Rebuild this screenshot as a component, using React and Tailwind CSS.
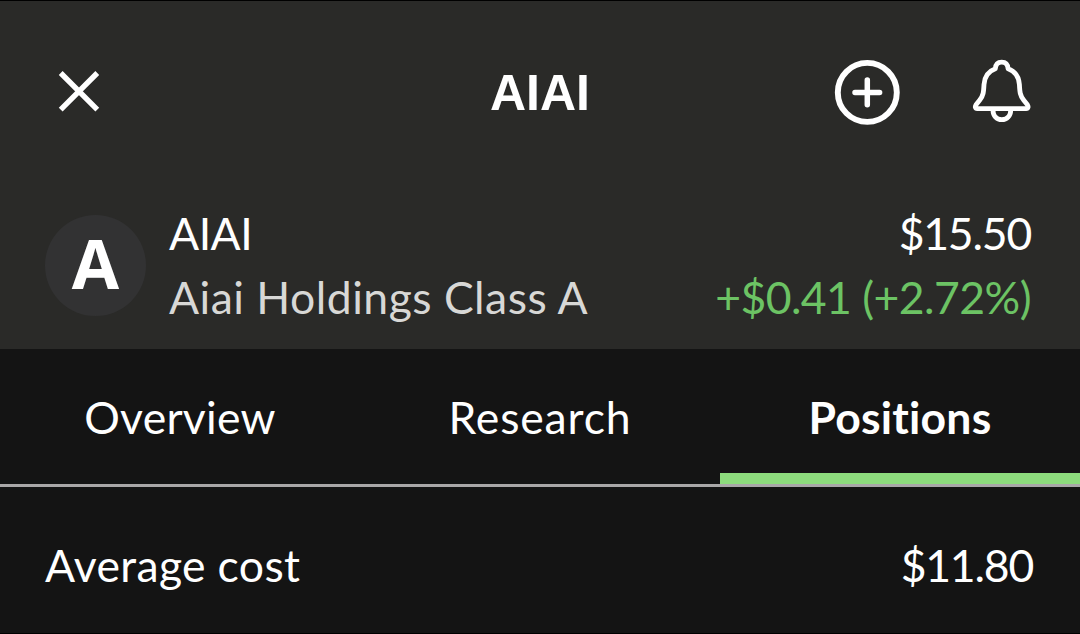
import { useState } from "react";

const tabs = [
  { name: "Overview", spacing: "tracking-[0.25px]" },
  { name: "Research", spacing: "tracking-[0.85px]" },
  { name: "Positions", spacing: "tracking-[0.2px]" },
];

function CloseIcon() {
  return (
    <svg width="44" height="44" viewBox="0 0 44 44" fill="none" stroke="currentColor" strokeWidth="5.4">
      <path d="M3.7 3 40.3 39.6M40.3 3 3.7 39.6" />
    </svg>
  );
}

function AddIcon() {
  return (
    <svg width="66" height="66" viewBox="0 0 66 66" fill="none" stroke="currentColor" strokeLinecap="round">
      <circle cx="33.3" cy="33.4" r="29.5" strokeWidth="5.9" />
      <path d="M33.3 21.1v24.6M21 33.4h24.6" strokeWidth="5.5" />
    </svg>
  );
}

function BellIcon() {
  return (
    <svg
      width="60"
      height="66"
      viewBox="0 0 60 66"
      fill="none"
      stroke="currentColor"
      strokeWidth="4.8"
      strokeLinecap="round"
      strokeLinejoin="round"
    >
      <path d="M29.7 3.2C26 3.2 23.6 5.6 23.3 9.8C16 12.4 12.6 17.6 12 25.5C11.6 33 11.4 36.5 7.8 41L4 45.8C2.8 47.6 3.2 49.6 5.2 49.6H54.2C56.2 49.6 56.6 47.6 55.4 45.8L51.6 41C48 36.5 47.8 33 47.4 25.5C46.8 17.6 43.4 12.4 36.1 9.8C35.8 5.6 33.4 3.2 29.7 3.2Z" />
      <path d="M21 51C21 57 24.8 60.7 29.8 60.7S38.7 57 38.7 51" />
    </svg>
  );
}

export default function App() {
  const [activeTab, setActiveTab] = useState("Positions");

  return (
    <div className="flex h-[634px] w-[1080px] flex-col overflow-hidden border-y border-black bg-[#141414] font-['Lato',sans-serif] text-[44.5px] leading-[64px] text-white [font-variant-ligatures:none]">
      <header className="h-[348px] shrink-0 bg-[#2a2a28]">
        {/* Top bar */}
        <div className="grid h-[182px] grid-cols-3 items-center px-12">
          <button type="button" aria-label="Close" className="ml-[9px] justify-self-start">
            <CloseIcon />
          </button>
          <h1 className="pt-px text-center font-['Liberation_Sans',sans-serif] text-[50px] font-bold">AIAI</h1>
          <div className="flex gap-[72px] justify-self-end">
            <button type="button" aria-label="Add">
              <AddIcon />
            </button>
            <button type="button" aria-label="Alerts">
              <BellIcon />
            </button>
          </div>
        </div>

        {/* Quote */}
        <div className="flex pt-[18px] pr-12 pl-[45px]">
          <div className="mt-3.5 mr-[23px] flex size-[101px] items-center justify-center rounded-full bg-[#323233] pb-[5px] font-['Open_Sans',sans-serif] text-[68.6px] font-bold">
            A
          </div>
          <div>
            <p className="tracking-[-0.5px]">AIAI</p>
            <p className="tracking-[0.48px] text-[#d8d8d6]">Aiai Holdings Class A</p>
          </div>
          <div className="ml-auto text-right">
            <p className="pr-px tracking-[-1.2px]">$15.50</p>
            <p className="pr-px tracking-[-0.55px] text-[#6cc364]">+$0.41 (+2.72%)</p>
          </div>
        </div>
      </header>

      <nav className="grid h-[138px] shrink-0 grid-cols-3 border-b-[3px] border-[#a9a7a8]">
        {tabs.map((tab) => (
          <button
            key={tab.name}
            type="button"
            onClick={() => setActiveTab(tab.name)}
            className={`${tab.spacing} ${
              activeTab === tab.name
                ? "border-b-[11px] border-[#8ddb7d] pt-[11px] font-bold"
                : ""
            }`}
          >
            {tab.name}
          </button>
        ))}
      </nav>

      <div className="flex justify-between pt-[46px] pr-[46px] pl-[45px]">
        <span className="tracking-[0.35px]">Average cost</span>
        <span className="pr-px tracking-[-1.2px]">$11.80</span>
      </div>
    </div>
  );
}
